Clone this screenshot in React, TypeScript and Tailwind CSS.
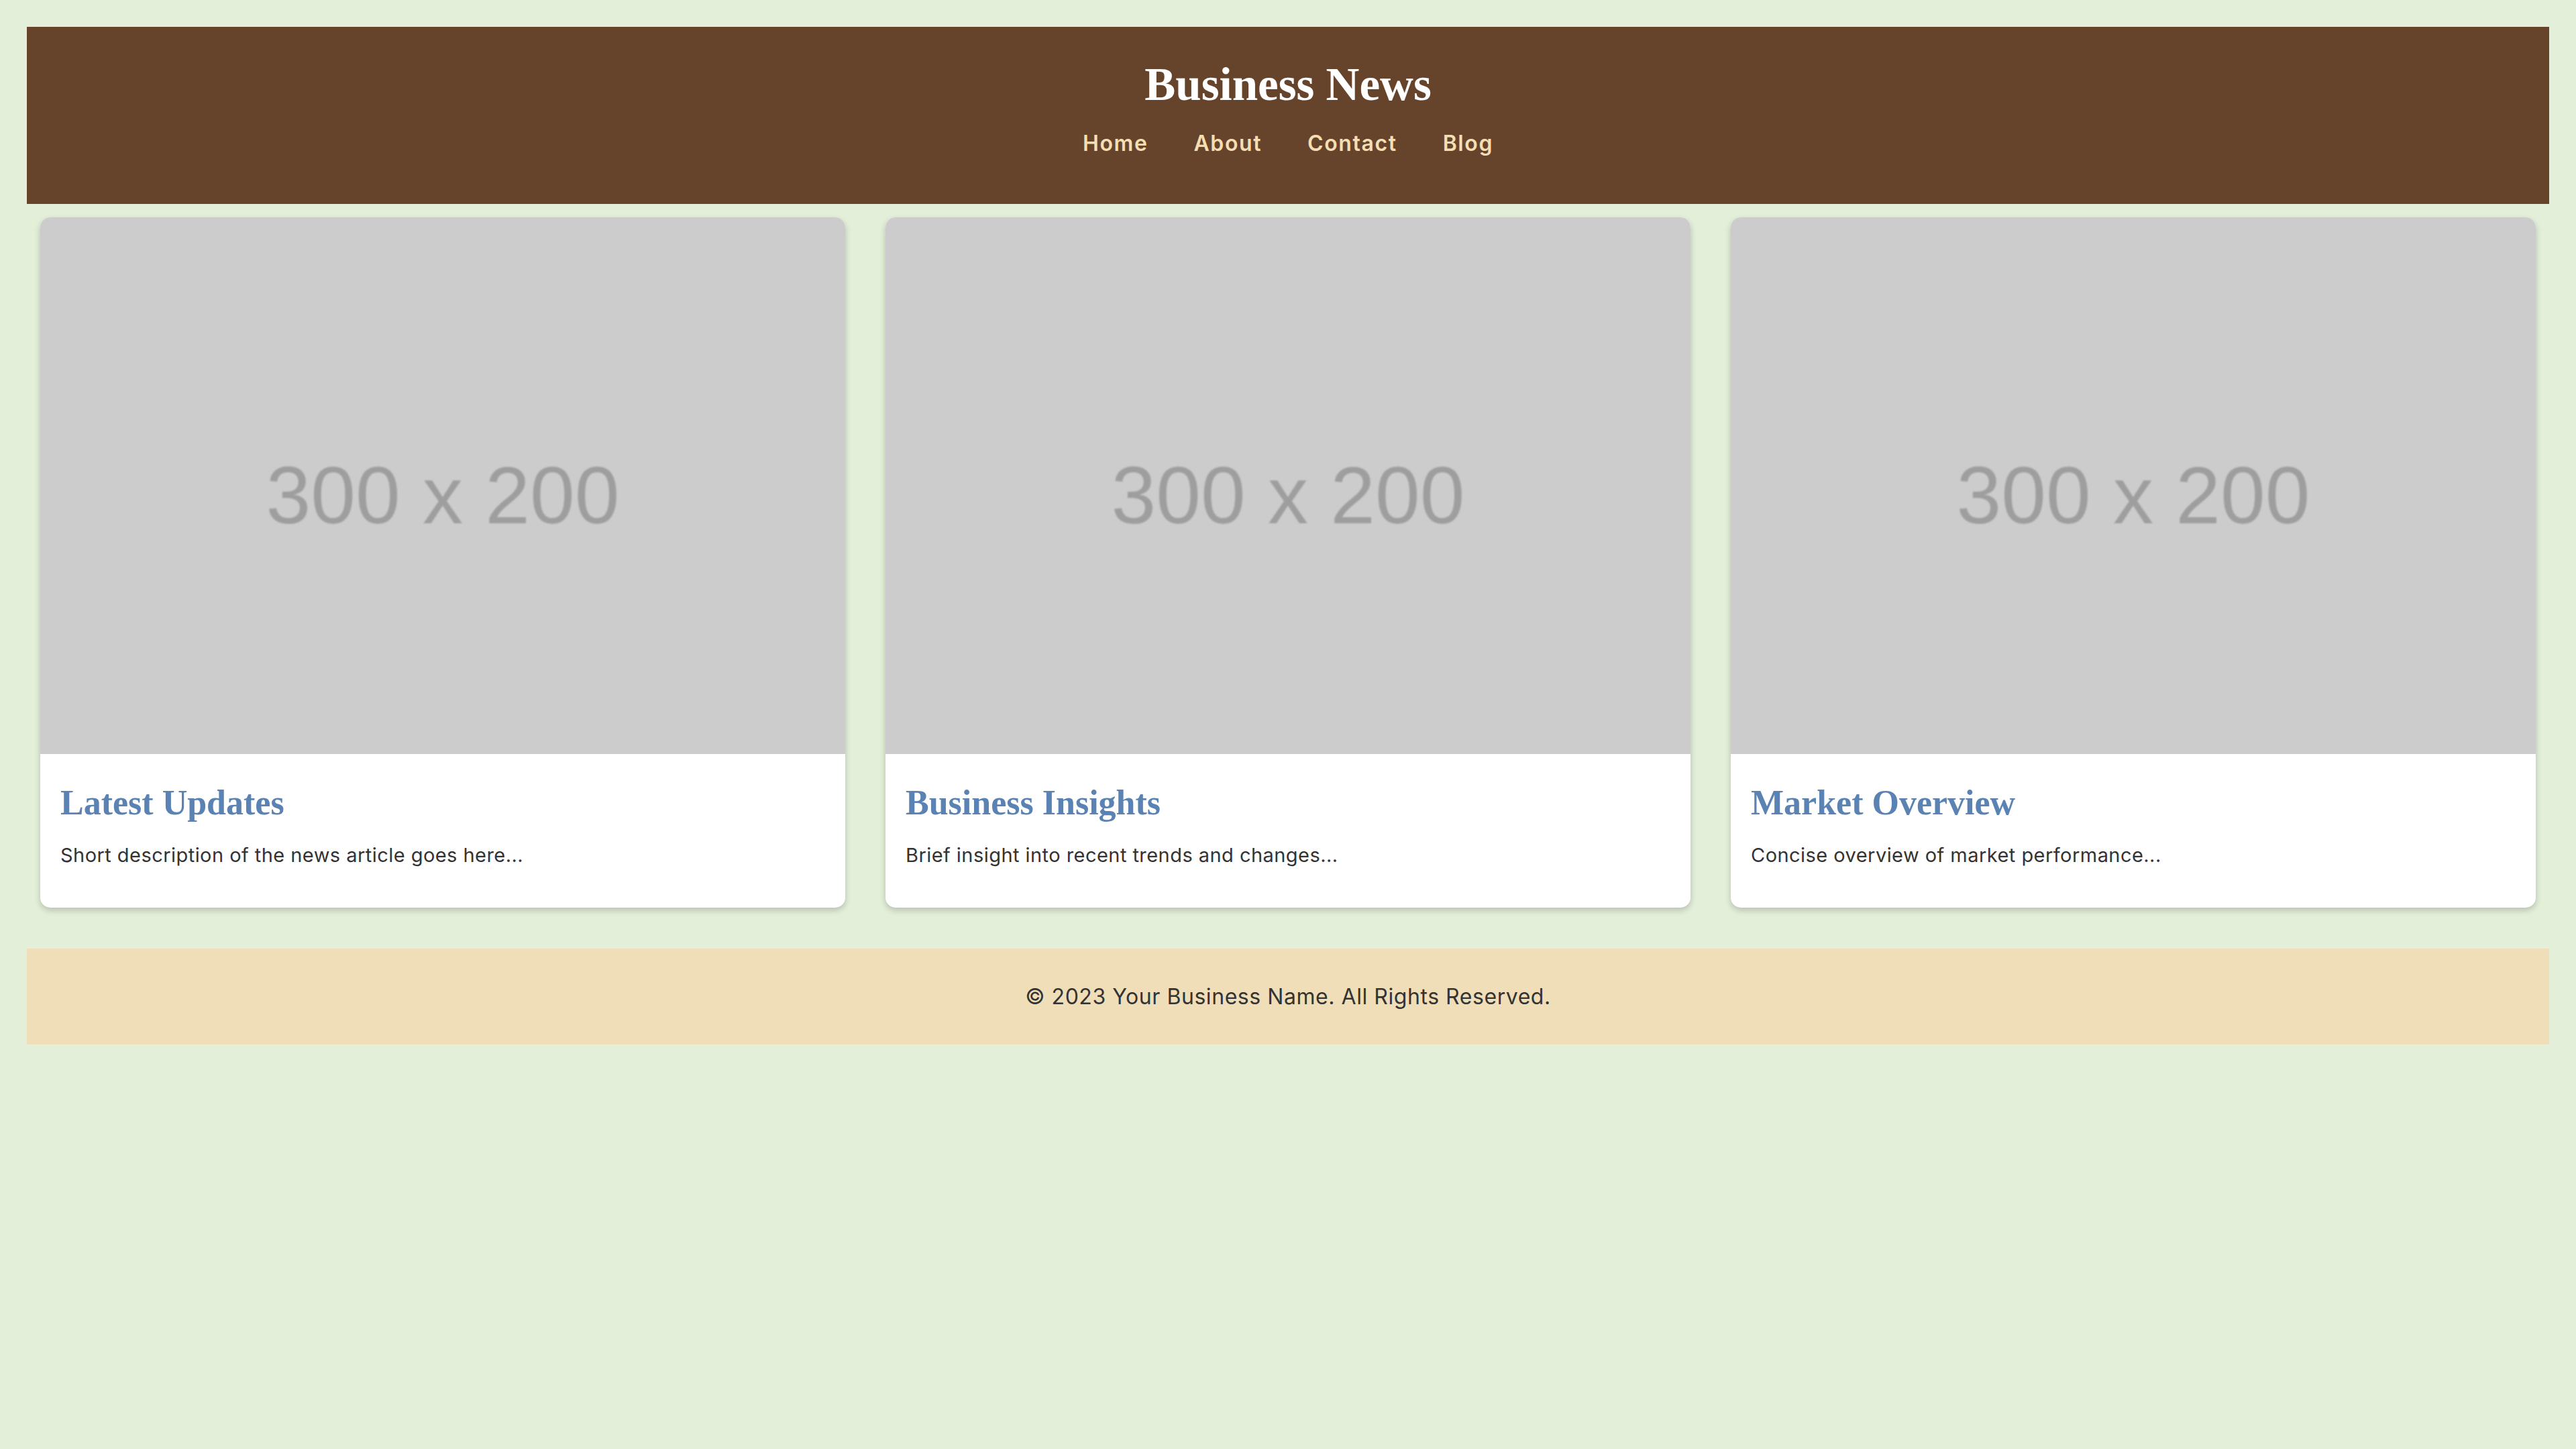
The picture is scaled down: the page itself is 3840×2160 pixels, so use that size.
import React from "react";

const cards = [
  { title: "Latest Updates", desc: "Short description of the news article goes here..." },
  { title: "Business Insights", desc: "Brief insight into recent trends and changes..." },
  { title: "Market Overview", desc: "Concise overview of market performance..." },
];

export default function App() {
  return (
    <div className="min-h-[2160px] w-full bg-[#e3efd9] p-[40px] font-['Inter',sans-serif] text-[#333333]">
      <header className="bg-[#66442b] pt-[46px] pb-[70px] text-center">
        <h1 className="font-['Liberation_Serif',serif] text-[69px] font-bold leading-[80px] text-white">
          Business News
        </h1>
        <nav className="mt-[28px] flex justify-center gap-[68px] text-[32px] font-semibold leading-[40px] tracking-[1.6px] text-[#f5deb3]">
          <a>Home</a>
          <a>About</a>
          <a>Contact</a>
          <a>Blog</a>
        </nav>
      </header>
      <main className="grid grid-cols-3 gap-[60px] px-[20px] pt-[20px] pb-[61px]">
        {cards.map((c) => (
          <article
            key={c.title}
            className="overflow-hidden rounded-[15px] bg-white shadow-[0_4px_10px_rgba(0,0,0,0.2)]"
          >
            <div className="flex h-[800px] items-center justify-center bg-[#cccccc] pt-[28px]">
              <span className="font-['Liberation_Sans',sans-serif] text-[120px] leading-none text-[#9e9e9e] blur-[1px]">
                300 x 200
              </span>
            </div>
            <div className="px-[30px] pt-[43px] pb-[58px]">
              <h2 className="font-['Liberation_Serif',serif] text-[52px] font-bold leading-[60px] text-[#5a83b3]">
                {c.title}
              </h2>
              <p className="mt-[28px] text-[29px] leading-[40px] tracking-[0.45px] text-[#333333]">{c.desc}</p>
            </div>
          </article>
        ))}
      </main>
      <footer className="flex h-[143px] items-center justify-center bg-[#f0deb8] text-[32px] tracking-[0.55px] text-[#333333]">
        © 2023 Your Business Name. All Rights Reserved.
      </footer>
    </div>
  );
}
